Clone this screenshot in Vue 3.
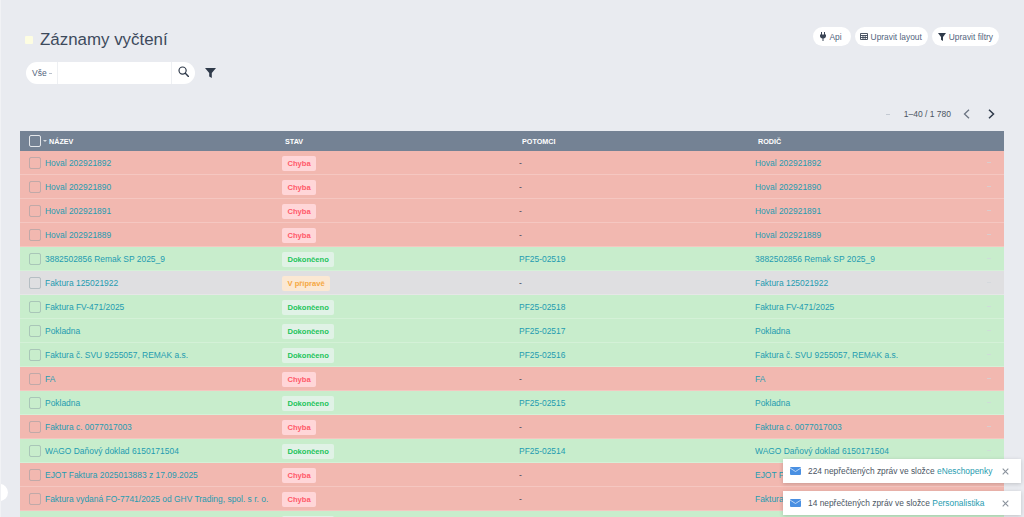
<script setup>
const rows = [
  { n: 'Hoval 202921892', s: 'e', c: '-' },
  { n: 'Hoval 202921890', s: 'e', c: '-' },
  { n: 'Hoval 202921891', s: 'e', c: '-' },
  { n: 'Hoval 202921889', s: 'e', c: '-' },
  { n: '3882502856 Remak SP 2025_9', s: 'd', c: 'PF25-02519' },
  { n: 'Faktura 125021922', s: 'p', c: '-' },
  { n: 'Faktura FV-471/2025', s: 'd', c: 'PF25-02518' },
  { n: 'Pokladna', s: 'd', c: 'PF25-02517' },
  { n: 'Faktura č. SVU 9255057, REMAK a.s.', s: 'd', c: 'PF25-02516' },
  { n: 'FA', s: 'e', c: '-' },
  { n: 'Pokladna', s: 'd', c: 'PF25-02515' },
  { n: 'Faktura c. 0077017003', s: 'e', c: '-' },
  { n: 'WAGO Daňový doklad 6150171504', s: 'd', c: 'PF25-02514' },
  { n: 'EJOT Faktura 2025013883 z 17.09.2025', s: 'e', c: '-' },
  { n: 'Faktura vydaná FO-7741/2025 od GHV Trading, spol. s r. o.', s: 'e', c: '-' },
  { n: '', s: 'd', c: '' },
]
const labels = { e: 'Chyba', d: 'Dokončeno', p: 'V přípravě' }
const toasts = [
  { t: '224 nepřečtených zpráv ve složce ', l: 'eNeschopenky' },
  { t: '14 nepřečtených zpráv ve složce ', l: 'Personalistika' },
]
</script>

<template>
  <div class="page">
    <header class="top">
      <div class="title-wrap">
        <span class="square"></span>
        <h1>Záznamy vyčtení</h1>
      </div>
      <div class="actions">
        <button class="pill api">
          <svg width="6" height="9" viewBox="0 0 6 9"><path d="M1 0h1v2.500h2V0h1v2.500h1V4C6 5.500 4.800 6.400 3.500 6.500V9h-1V6.500C1.200 6.400 0 5.500 0 4V2.500h1z" fill="#3b4656"/></svg>
          Api
        </button>
        <button class="pill">
          <svg width="8" height="7" viewBox="0 0 8 7"><path d="M.5.500h7v6h-7zM.5 2.500h7M.5 4.500h7M3 2.500v4M5.200 2.500v4" fill="none" stroke="#3b4656" stroke-width=".9"/></svg>
          Upravit layout
        </button>
        <button class="pill">
          <svg width="8" height="8" viewBox="0 0 8 8"><path d="M0 0h8L5 4v4L3 6.800V4z" fill="#2f3a4a"/></svg>
          Upravit filtry
        </button>
      </div>
    </header>

    <div class="search-row">
      <div class="search">
        <div class="scope">Vše <span class="scope-caret"></span></div>
        <div class="field"></div>
        <div class="go">
          <svg width="11" height="11" viewBox="0 0 12 12"><circle cx="5" cy="5" r="3.900" fill="none" stroke="#2f3a4a" stroke-width="1.300"/><path d="M8 8l3.400 3.400" stroke="#2f3a4a" stroke-width="1.600" stroke-linecap="round"/></svg>
        </div>
      </div>
      <svg class="funnel" width="11" height="10" viewBox="0 0 11 10"><path d="M0 0h11L6.800 5v5L4.200 8.500V5z" fill="#2f3a4a"/></svg>
    </div>

    <div class="pager">
      <span class="pager-dash"></span>
      <span class="pager-text">1–40 / 1 780</span>
      <svg class="prev" width="7" height="10" viewBox="0 0 7 10"><path d="M6 .8L1.500 5 6 9.200" fill="none" stroke="#6b7482" stroke-width="1.300"/></svg>
      <svg class="next" width="7" height="10" viewBox="0 0 7 10"><path d="M1 .8L5.500 5 1 9.200" fill="none" stroke="#2f3a4a" stroke-width="1.500"/></svg>
    </div>

    <div class="table">
      <div class="thead">
        <div class="th first"><span class="cb head-cb"></span><span class="sort"></span>NÁZEV</div>
        <div class="th">STAV</div>
        <div class="th">POTOMCI</div>
        <div class="th">RODIČ</div>
        <div></div>
      </div>
      <div v-for="(r, i) in rows" :key="i" class="tr" :class="'row-' + r.s">
        <div class="td first"><span class="cb"></span><a class="link">{{ r.n }}</a></div>
        <div class="td"><span class="chip" :class="'chip-' + r.s">{{ labels[r.s] }}</span></div>
        <div class="td"><a v-if="r.c !== '-'" class="link">{{ r.c }}</a><span v-else class="plain">-</span></div>
        <div class="td"><a class="link">{{ r.n }}</a></div>
        <div class="td"><span class="end-dash"></span></div>
      </div>
    </div>

    <span class="side-dot"></span>

    <div class="toasts">
      <div v-for="t in toasts" :key="t.l" class="toast">
        <svg width="11" height="8" viewBox="0 0 11 8"><rect width="11" height="8" rx="1" fill="#4a90e2"/><path d="M0 1l5.500 3.500L11 1" fill="none" stroke="#d8e8fb" stroke-width=".8"/></svg>
        <span class="toast-text">{{ t.t }}<a class="toast-link">{{ t.l }}</a></span>
        <svg class="toast-x" width="7" height="7" viewBox="0 0 7 7"><path d="M.7.700l5.600 5.600M6.300.700L.7 6.300" stroke="#8a929c" stroke-width="1.100"/></svg>
      </div>
    </div>
  </div>
</template>

<style>
html, body { margin: 0; height: 517px; overflow: hidden; background: #e9ebf0; }
</style>

<style scoped>
.page {
  position: relative;
  height: 517px;
  overflow: hidden;
  box-sizing: border-box;
  padding: 26px 20px 0 19px;
  border-left: 1px solid #f1f2f5;
  background: #e9ebf0;
  font-family: "Liberation Sans", Arial, sans-serif;
  color: #3b4656;
}
.top { display: flex; justify-content: space-between; align-items: flex-start; height: 36px; }
.title-wrap { display: flex; align-items: center; padding: 1px 0 0 5px; height: 26px; }
.square { width: 8px; height: 8px; border-radius: 1px; background: #fdfde2; margin-right: 7px; }
h1 { margin: 0; font-size: 16.900px; font-weight: 400; color: #3d4a5c; line-height: 26px; }
.actions { display: flex; gap: 4px; padding: 1px 5px 0 0; }
.pill {
  display: flex; align-items: center; gap: 3px; height: 19px; padding: 0 6px 0 5px;
  border: 0; border-radius: 10px; background: #fff;
  font: 8.400px "Liberation Sans", Arial, sans-serif; color: #52657e;
}
.pill:last-child { padding: 0 6px; }
.pill.api { padding: 0 9px 0 7px; }
.search-row { display: flex; align-items: center; padding-left: 6px; height: 22px; }
.search { display: flex; width: 169px; height: 22px; background: #fff; border-radius: 11px; overflow: hidden; }
.scope { width: 32px; box-sizing: border-box; padding-left: 6px; display: flex; align-items: center; gap: 2px; font-size: 8.500px; color: #52657e; border-right: 1px solid #eef0f3; }
.scope-caret { width: 3px; height: 1px; background: #b9c1cc; margin-top: 1px; }
.field { flex: 1; }
.go { width: 24px; display: flex; align-items: center; justify-content: center; border-left: 1px solid #eef0f3; padding-bottom: 3px; box-sizing: border-box; }
.funnel { margin-left: 10px; }
.pager { display: flex; align-items: center; justify-content: flex-end; height: 16px; margin-top: 22px; padding-right: 9px; }
.pager-dash { width: 4px; height: 1px; background: #c4cad3; margin-right: 14px; }
.pager-text { font-size: 8.500px; color: #4b5563; margin-right: 12px; }
.prev { margin-right: 18px; }
.table { margin-top: 9px; width: 984px; }
.thead, .tr { display: grid; grid-template-columns: 262px 237px 236px 232px 17px; }
.thead { height: 20px; align-items: center; background: #748294; color: #fff; font-size: 7.200px; font-weight: 700; }
.th { padding-left: 3px; }
.th.first { display: flex; align-items: center; padding-left: 9px; }
.tr { height: 24px; box-sizing: border-box; border-bottom: 1px solid rgba(255,255,255,.22); align-items: center; }
.td { font-size: 8.450px; white-space: nowrap; overflow: hidden; }
.td.first { display: flex; align-items: center; padding-left: 9px; }
.row-e { background: #f2b8b0; }
.row-d { background: #c8edcc; }
.row-p { background: #dfdfe1; }
.cb { flex: none; width: 10px; height: 10px; border: 1px solid rgba(130,150,160,.45); border-radius: 2px; margin-right: 4px; }
.head-cb { border-color: #e3e6ea; width: 10px; height: 10px; margin-right: 2px; }
.sort { width: 0; height: 0; border: 2px solid transparent; border-top-color: #d5dae0; border-bottom: 0; margin-right: 2px; }
.link { color: #1f9cb0; }
.plain { color: #3b4656; }
.chip { display: inline-block; height: 15px; line-height: 15px; margin-top: 1px; padding: 0 5.500px; border-radius: 2px; font-size: 7.600px; font-weight: 700; vertical-align: middle; }
.chip-e { background: #ffd6d8; color: #ff5a6a; }
.chip-d { background: #e0f2e6; color: #22c45a; }
.chip-p { background: #fbe8d3; color: #f5a742; }
.end-dash { display: block; width: 4px; height: 1px; background: #d0d6dc; opacity: .7; }
.side-dot { position: absolute; left: -10px; top: 484px; width: 17px; height: 17px; border-radius: 50%; background: #fff; }
.toasts { position: absolute; left: 782px; top: 459px; display: flex; flex-direction: column; gap: 8px; width: 238px; }
.toast { height: 24px; display: flex; align-items: center; padding: 0 12px 0 7px; background: #fff; box-shadow: 0 1px 4px rgba(0,0,0,.18); font-size: 8.400px; color: #4b5563; }
.toast-text { margin-left: 7px; flex: 1; white-space: nowrap; }
.toast-link { color: #1f9cb0; }
.toast-x { flex: none; }
</style>
